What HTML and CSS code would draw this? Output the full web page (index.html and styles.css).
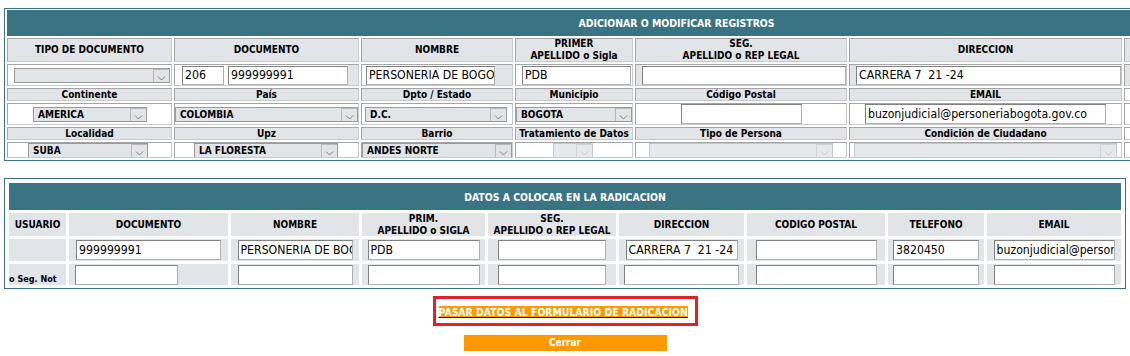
FILE: index.html
```html
<!DOCTYPE html>
<html lang="es">
<head>
<meta charset="utf-8">
<title>Adicionar o modificar registros</title>
<link rel="stylesheet" href="styles.css">
</head>
<body>
<section class="reg">
  <div class="bar">ADICIONAR O MODIFICAR REGISTROS</div>

  <div class="c hd">TIPO DE DOCUMENTO</div>
  <div class="c hd">DOCUMENTO</div>
  <div class="c hd">NOMBRE</div>
  <div class="c hd">PRIMER<br>APELLIDO o Sigla</div>
  <div class="c hd">SEG.<br>APELLIDO o REP LEGAL</div>
  <div class="c hd">DIRECCION</div>
  <div class="c hd"></div>

  <div class="c"><span class="sel s-tipo"><span class="txt"></span><span class="arr"><svg width="9" height="5" viewBox="0 0 9 5"><polyline points="1,0.5 4.5,4 8,0.5" fill="none" stroke="#7a7a7a" stroke-width="1"/></svg></span></span></div>
  <div class="c"><span class="inp i-cod">206</span><span class="inp i-doc">999999991</span><span class="fill"></span></div>
  <div class="c"><span class="inp i-nom">PERSONERIA DE BOGOTA</span><span class="fill"></span></div>
  <div class="c"><span class="inp i-pdb">PDB</span></div>
  <div class="c"><span class="fill f-seg"></span><span class="inp i-seg"></span></div>
  <div class="c"><span class="fill f-dir"></span><span class="inp i-dir">CARRERA 7&nbsp; 21 -24</span></div>
  <div class="c gray"></div>

  <div class="c lb">Continente</div>
  <div class="c lb">País</div>
  <div class="c lb">Dpto / Estado</div>
  <div class="c lb">Municipio</div>
  <div class="c lb">Código Postal</div>
  <div class="c lb">EMAIL</div>
  <div class="c"></div>

  <div class="c"><span class="sel s-cont"><span class="txt">AMERICA</span><span class="arr"><svg width="9" height="5" viewBox="0 0 9 5"><polyline points="1,0.5 4.5,4 8,0.5" fill="none" stroke="#7a7a7a" stroke-width="1"/></svg></span></span></div>
  <div class="c"><span class="sel s-pais"><span class="txt">COLOMBIA</span><span class="arr"><svg width="9" height="5" viewBox="0 0 9 5"><polyline points="1,0.5 4.5,4 8,0.5" fill="none" stroke="#7a7a7a" stroke-width="1"/></svg></span></span></div>
  <div class="c"><span class="sel s-dpto"><span class="txt">D.C.</span><span class="arr"><svg width="9" height="5" viewBox="0 0 9 5"><polyline points="1,0.5 4.5,4 8,0.5" fill="none" stroke="#7a7a7a" stroke-width="1"/></svg></span></span></div>
  <div class="c"><span class="sel s-mun"><span class="txt">BOGOTA</span><span class="arr"><svg width="9" height="5" viewBox="0 0 9 5"><polyline points="1,0.5 4.5,4 8,0.5" fill="none" stroke="#7a7a7a" stroke-width="1"/></svg></span></span></div>
  <div class="c"><span class="inp i-cp"></span></div>
  <div class="c"><span class="inp i-mail">buzonjudicial@personeriabogota.gov.co</span></div>
  <div class="c"></div>

  <div class="c lb">Localidad</div>
  <div class="c lb">Upz</div>
  <div class="c lb">Barrio</div>
  <div class="c lb">Tratamiento de Datos</div>
  <div class="c lb">Tipo de Persona</div>
  <div class="c lb">Condición de Ciudadano</div>
  <div class="c"></div>

  <div class="c"><span class="sel s-loc"><span class="txt">SUBA</span><span class="arr"><svg width="9" height="5" viewBox="0 0 9 5"><polyline points="1,0.5 4.5,4 8,0.5" fill="none" stroke="#7a7a7a" stroke-width="1"/></svg></span></span></div>
  <div class="c"><span class="sel s-upz"><span class="txt">LA FLORESTA</span><span class="arr"><svg width="9" height="5" viewBox="0 0 9 5"><polyline points="1,0.5 4.5,4 8,0.5" fill="none" stroke="#7a7a7a" stroke-width="1"/></svg></span></span></div>
  <div class="c"><span class="sel s-bar"><span class="txt">ANDES NORTE</span><span class="arr"><svg width="9" height="5" viewBox="0 0 9 5"><polyline points="1,0.5 4.5,4 8,0.5" fill="none" stroke="#7a7a7a" stroke-width="1"/></svg></span></span></div>
  <div class="c"><span class="sel dis s-trat"><span class="txt"></span><span class="arr"><svg width="9" height="5" viewBox="0 0 9 5"><polyline points="1,0.5 4.5,4 8,0.5" fill="none" stroke="#c4c4c4" stroke-width="1"/></svg></span></span></div>
  <div class="c"><span class="sel dis s-tper"><span class="txt"></span><span class="arr"><svg width="9" height="5" viewBox="0 0 9 5"><polyline points="1,0.5 4.5,4 8,0.5" fill="none" stroke="#c4c4c4" stroke-width="1"/></svg></span></span></div>
  <div class="c"><span class="sel dis s-cond"><span class="txt"></span><span class="arr"><svg width="9" height="5" viewBox="0 0 9 5"><polyline points="1,0.5 4.5,4 8,0.5" fill="none" stroke="#c4c4c4" stroke-width="1"/></svg></span></span></div>
  <div class="c"></div>
</section>

<section class="rad">
  <div class="bar">DATOS A COLOCAR EN LA RADICACION</div>

  <div class="g hd">USUARIO</div>
  <div class="g hd">DOCUMENTO</div>
  <div class="g hd">NOMBRE</div>
  <div class="g hd">PRIM.<br>APELLIDO o SIGLA</div>
  <div class="g hd">SEG.<br>APELLIDO o REP LEGAL</div>
  <div class="g hd">DIRECCION</div>
  <div class="g hd">CODIGO POSTAL</div>
  <div class="g hd">TELEFONO</div>
  <div class="g hd">EMAIL</div>

  <div class="g"></div>
  <div class="g"><span class="inp b-doc">999999991</span></div>
  <div class="g"><span class="inp b-nom">PERSONERIA DE BOGOTA</span></div>
  <div class="g"><span class="inp b-pri">PDB</span></div>
  <div class="g"><span class="inp b-seg"></span></div>
  <div class="g"><span class="inp b-dir">CARRERA 7&nbsp; 21 -24</span></div>
  <div class="g"><span class="inp b-cp"></span></div>
  <div class="g"><span class="inp b-tel">3820450</span></div>
  <div class="g"><span class="inp b-mail">buzonjudicial@personeriabogota.gov.co</span></div>

  <div class="g note">o Seg. Not</div>
  <div class="g left"><span class="inp b-doc2"></span></div>
  <div class="g"><span class="inp b-nom"></span></div>
  <div class="g"><span class="inp b-pri"></span></div>
  <div class="g"><span class="inp b-seg"></span></div>
  <div class="g"><span class="inp b-dir2"></span></div>
  <div class="g"><span class="inp b-cp"></span></div>
  <div class="g"><span class="inp b-tel"></span></div>
  <div class="g"><span class="inp b-mail"></span></div>
</section>

<div class="actions">
  <div class="pasar"><a class="link" href="#">PASAR DATOS AL FORMULARIO DE RADICACION</a></div>
  <div class="cerrar">Cerrar</div>
</div>
</body>
</html>
```

FILE: styles.css
```css
* { box-sizing: border-box; }
html, body { margin: 0; overflow: hidden; background: #fff; }
body {
  width: 1130px;
  height: 356px;
  padding: 8px 0 0 4px;
  font-family: "DejaVu Sans Condensed", "DejaVu Sans", Verdana, sans-serif;
  font-size: 10px;
  color: #000;
}

/* ---------- top block ---------- */
.reg {
  display: grid;
  width: max-content;
  border: 1px solid #3a7482;
  padding: 1px 2px 2px;
  gap: 2px;
  grid-template-columns: 165px 185px 152px 118px 212px 273px 222px;
  grid-template-rows: 26px 24px 22px 13px 22px 13px 16px;
}
.bar {
  grid-column: 1 / -1;
  background: #3a7482;
  color: #fff;
  font-weight: bold;
  font-size: 10.4px;
  display: flex;
  align-items: center;
  justify-content: center;
}
.c {
  border: 1px solid #a4a4a4;
  border-right-color: #c8c8c8;
  border-bottom-color: #c8c8c8;
  background: #fff;
  display: flex;
  align-items: center;
  overflow: hidden;
  min-width: 0;
}
.c.gray { background: #e1e5e8; }
.hd {
  background: #e1e5e8;
  justify-content: center;
  text-align: center;
  font-weight: bold;
  line-height: 12px;
}
.lb {
  background: #e1e5e8;
  justify-content: center;
  font-weight: bold;
  white-space: nowrap;
  line-height: 11px;
}
.fill { flex: 1; align-self: stretch; background: #e1e5e8; }
.fill.f-seg { flex: 0 0 6px; }
.fill.f-dir { flex: 0 0 6px; }

/* inputs */
.inp {
  display: block;
  height: 20px;
  border: 1px solid #808080;
  border-right-color: #b0b0b0;
  border-bottom-color: #b0b0b0;
  background: #fff;
  font-family: "DejaVu Sans Condensed", "DejaVu Sans", sans-serif;
  font-weight: normal;
  font-size: 12.2px;
  line-height: 18px;
  padding: 0 2px;
  white-space: nowrap;
  overflow: hidden;
  flex: none;
}
.i-cod { width: 42px; margin-left: 7px; height: 19px; line-height: 17px; }
.i-doc { width: 120px; margin-left: 4px; height: 19px; line-height: 17px; }
.i-nom { width: 129px; margin-left: 4px; height: 19px; line-height: 17px; }
.i-pdb { width: 109px; margin-left: 6px; height: 19px; line-height: 17px; }
.i-seg { width: 204px; height: 19px; }
.i-dir { width: 265px; height: 19px; line-height: 17px; }
.i-cp { width: 121px; margin-left: 45px; }
.i-mail { width: 241px; margin-left: 15px; }

/* selects */
.sel {
  display: flex;
  align-items: stretch;
  height: 15px;
  border: 1px solid #9a9a9a;
  background: #e1e5e8;
  font-weight: bold;
  font-size: 10px;
  flex: none;
}
.sel .txt {
  flex: 1;
  padding-left: 4px;
  line-height: 13px;
  white-space: nowrap;
  overflow: hidden;
}
.sel .arr {
  width: 16px;
  border: 1px solid #b9b9b9;
  border-right: 0;
  border-bottom: 0;
  display: flex;
  align-items: flex-end;
  justify-content: center;
  padding-bottom: 1px;
  background: #e1e5e8;
}
.sel.dis { border-color: #c6c6c6; background: #e6e9ec; }
.sel.dis .arr { border-color: #d2d2d2; background: #e6e9ec; }

.s-tipo { width: 156px; margin-left: 6px; }
.s-cont { width: 114px; margin-left: 25px; }
.s-pais { width: 183px; }
.s-dpto { width: 142px; margin-left: 3px; }
.s-mun  { width: 116px; }
.s-loc  { width: 120px; margin-left: 20px; }
.s-upz  { width: 144px; margin-left: 19px; }
.s-bar  { width: 150px; }
.s-trat { width: 40px; margin-left: 37px; }
.s-tper { width: 184px; margin-left: 13px; }
.s-cond { width: 263px; margin-left: 4px; }

/* ---------- bottom block ---------- */
.rad {
  display: grid;
  width: 1122px;
  margin-top: 17px;
  border: 1px solid #3a7482;
  padding: 4px 4px 3px;
  gap: 3px;
  grid-template-columns: 57px 159px 128px 123px 128px 125px 138px 96px 134px;
  grid-template-rows: 27px 23px 22px 21px;
}
.g {
  background: #e1e5e8;
  display: flex;
  align-items: center;
  justify-content: center;
  min-width: 0;
}
.g.left { justify-content: flex-start; padding-left: 6px; }
.g.note {
  justify-content: flex-start;
  align-items: flex-end;
  font-size: 9px;
  font-weight: bold;
  white-space: nowrap;
  padding-bottom: 1px;
}
.b-doc  { width: 145px; }
.b-doc2 { width: 103px; }
.b-nom  { width: 115px; }
.b-pri  { width: 112px; }
.b-seg  { width: 108px; }
.b-dir  { width: 112px; }
.b-dir2 { width: 115px; }
.b-cp   { width: 121px; }
.b-tel  { width: 86px; }
.b-mail { width: 121px; }

/* ---------- actions ---------- */
.actions {
  display: flex;
  flex-direction: column;
  align-items: center;
  width: 1122px;
}
.pasar {
  margin-top: 7px;
  width: 265px;
  height: 30px;
  border: 3px solid #e4202a;
  padding: 7px 0 0 3px;
}
.link {
  display: inline-block;
  background: #ff9900;
  color: #fff;
  font-weight: bold;
  font-size: 10.4px;
  line-height: 12px;
  text-decoration: underline;
  text-decoration-color: #0000ee;
  white-space: nowrap;
}
.cerrar {
  margin-top: 9px;
  width: 203px;
  height: 16px;
  background: #ff9900;
  color: #fff;
  font-weight: bold;
  font-size: 10px;
  line-height: 16px;
  text-align: center;
}
```
